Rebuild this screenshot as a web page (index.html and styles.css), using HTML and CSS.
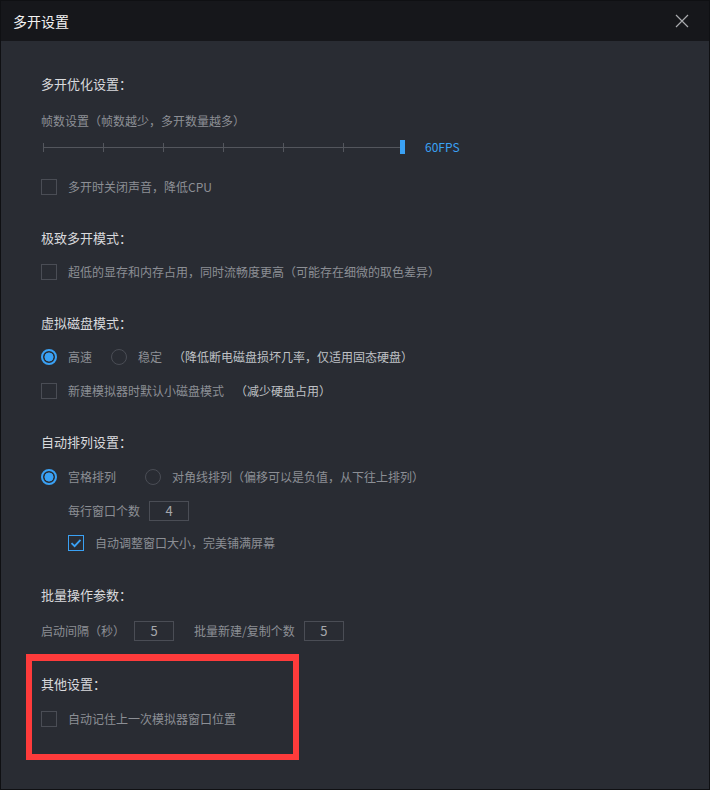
FILE: index.html
```html
<!DOCTYPE html>
<html lang="zh-CN">
<head>
<meta charset="utf-8">
<title>多开设置</title>
<link rel="stylesheet" href="styles.css">
</head>
<body>
<div class="window">
  <div class="titlebar">
    <span class="title">多开设置</span>
    <svg class="close" width="14" height="14" viewBox="0 0 14 14"><path d="M1 1L13 13M13 1L1 13" stroke="#a9abae" stroke-width="1.2" fill="none"/></svg>
  </div>
  <div class="content">
    <section class="section first">
      <div class="heading">多开优化设置：</div>
      <div class="row sub-row">帧数设置（帧数越少，多开数量越多）</div>
      <div class="row slider-row">
        <div class="slider">
          <span class="tick"></span><span class="tick"></span><span class="tick"></span><span class="tick"></span><span class="tick"></span><span class="tick"></span><span class="thumb"></span>
        </div>
        <span class="fps">60FPS</span>
      </div>
      <label class="row check-row gap-20"><span class="box"></span><span>多开时关闭声音，降低CPU</span></label>
    </section>

    <section class="section">
      <div class="heading">极致多开模式：</div>
      <label class="row check-row"><span class="box"></span><span>超低的显存和内存占用，同时流畅度更高（可能存在细微的取色差异）</span></label>
    </section>

    <section class="section">
      <div class="heading">虚拟磁盘模式：</div>
      <div class="row radio-row">
        <span class="radio on"></span><span class="opt">高速</span>
        <span class="radio gap-a"></span><span class="opt">稳定</span>
        <span class="note">（降低断电磁盘损坏几率，仅适用固态硬盘）</span>
      </div>
      <label class="row check-row"><span class="box"></span><span>新建模拟器时默认小磁盘模式</span><span class="note">（减少硬盘占用）</span></label>
    </section>

    <section class="section">
      <div class="heading">自动排列设置：</div>
      <div class="row radio-row loose">
        <span class="radio on"></span><span class="opt">宫格排列</span>
        <span class="radio gap-b"></span><span class="opt">对角线排列（偏移可以是负值，从下往上排列）</span>
      </div>
      <div class="row indent field-row"><span>每行窗口个数</span><span class="input">4</span></div>
      <label class="row indent check-row tight"><span class="box checked"><svg width="12" height="10" viewBox="0 0 12 10"><path d="M1.5 5.2L4.6 8.2L10.5 1.8" stroke="#3aa1f4" stroke-width="1.8" fill="none"/></svg></span><span>自动调整窗口大小，完美铺满屏幕</span></label>
    </section>

    <section class="section batch">
      <div class="heading">批量操作参数：</div>
      <div class="row field-row batch-row"><span>启动间隔（秒）</span><span class="input">5</span><span class="field-label">批量新建/复制个数</span><span class="input">5</span></div>
    </section>

    <section class="section other">
      <div class="heading">其他设置：</div>
      <label class="row check-row other-row"><span class="box"></span><span>自动记住上一次模拟器窗口位置</span></label>
    </section>
  </div>
  <div class="highlight"></div>
</div>
</body>
</html>
```

FILE: styles.css
```css
* { box-sizing: border-box; }

body {
  margin: 0;
  background: #292c33;
  font-family: "Noto Sans CJK SC", "Microsoft YaHei", sans-serif;
}

.window {
  position: relative;
  width: 710px;
  height: 790px;
  border: 1px solid #0f1013;
  background: #292c33;
  overflow: hidden;
}

.titlebar {
  height: 40px;
  background: #16171b;
  display: flex;
  align-items: center;
  justify-content: space-between;
  padding: 0 20px 0 12px;
}

.title {
  color: #f2f2f2;
  font-size: 14px;
}

.close { margin-top: -1px; }

.content {
  padding: 0 40px;
  color: #8c8f95;
  font-size: 12px;
}

.section { margin-top: 31px; }
.section.first { margin-top: 33px; }
.section.batch { margin-top: 32px; }
.section.other { margin-top: 33px; }

.heading {
  height: 20px;
  line-height: 20px;
  font-size: 13px;
  color: #d9dadd;
}

.row {
  height: 20px;
  display: flex;
  align-items: center;
  margin-top: 14px;
  line-height: 20px;
}

.sub-row { margin-top: 17px; }
.slider-row { margin-top: 6px; }
.gap-20 { margin-top: 20px; }
.loose { margin-top: 15px; }
.tight { margin-top: 12px; }
.batch-row { margin-top: 16px; }
.other-row { margin-top: 15px; }

.indent { padding-left: 27px; }

.slider {
  width: 365px;
  height: 14px;
  padding-left: 2px;
  display: flex;
  align-items: center;
  gap: 59px;
  background: linear-gradient(#53565d, #53565d) no-repeat 2px 7px / 358px 1px;
}

.tick {
  width: 1px;
  height: 9px;
  background: #53565d;
}

.thumb {
  width: 5px;
  height: 14px;
  margin-left: -3px;
  background: #3aa1f4;
}

.fps {
  margin-left: 19px;
  color: #3aa1f4;
}

.check-row { gap: 11px; }

.box {
  width: 16px;
  height: 16px;
  border: 1px solid #4a4d55;
  display: flex;
  align-items: center;
  justify-content: center;
  flex: none;
}

.box.checked { border-color: #3aa1f4; }

.radio-row { gap: 11px; }

.radio {
  width: 16px;
  height: 16px;
  border-radius: 50%;
  border: 1px solid #4a4d55;
  flex: none;
}

.radio.on {
  border: 2px solid #3aa1f4;
  background: radial-gradient(circle, #3aa1f4 0 4.2px, transparent 4.8px);
}

.radio.gap-a { margin-left: 8px; }
.radio.gap-b { margin-left: 18px; }

.note { color: #bfc1c5; }

.field-row { gap: 9px; }

.input {
  width: 40px;
  height: 20px;
  border: 1px solid #4a4d55;
  text-align: center;
  line-height: 18px;
  font-size: 13px;
  color: #a6a8ac;
}

.field-label { margin-left: 11px; }

.highlight {
  position: absolute;
  left: 25px;
  top: 653px;
  width: 273px;
  height: 106px;
  border: 6px solid #fe3b3b;
  border-top-width: 7px;
}
```
